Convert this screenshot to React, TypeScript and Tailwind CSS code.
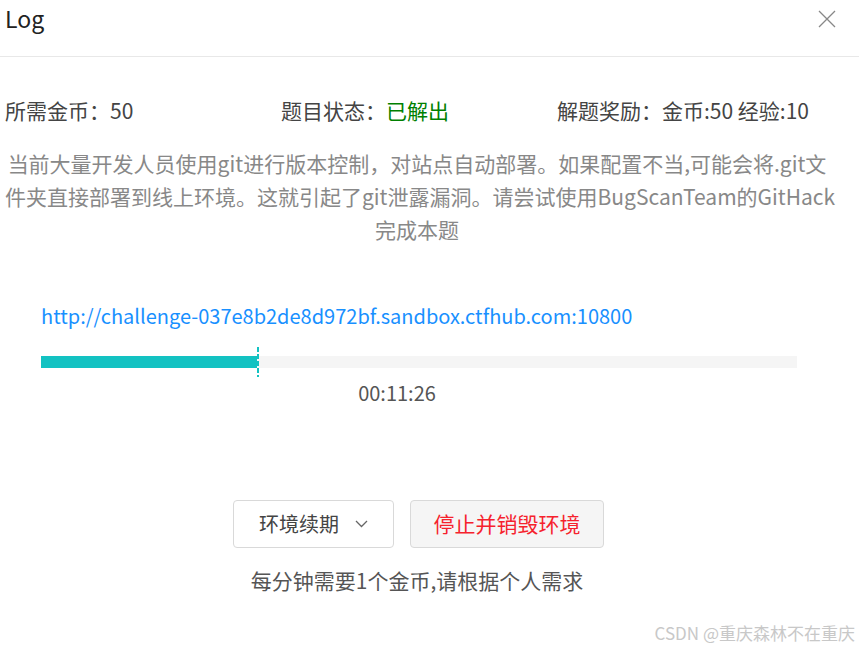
import React from 'react';

const font = { fontFamily: '"Noto Sans CJK SC", sans-serif' };

const App = () => {
  const percent = 28.6;

  return (
    <div className="relative w-[859px] h-[646px] bg-white text-[#333]" style={font}>
      <div className="flex h-[57px] items-start justify-between border-b border-[#e8e8e8] pl-[5px] pr-[23px] pt-[3px]">
        <span className="text-[23px] leading-[30px] text-[#222]">Log</span>
        <svg className="mt-[7px]" width="18" height="18" viewBox="0 0 18 18" fill="none" stroke="#888" strokeWidth="1.3">
          <path d="M1 1L17 17M17 1L1 17" />
        </svg>
      </div>

      <div className="w-[829px] pl-[5px]">
        <div className="mt-[40px] grid grid-cols-[276px_276px_276px] text-[21px] leading-[26px] text-[#444]">
          <div>所需金币：50</div>
          <div>
            题目状态：<span className="text-[#008000]">已解出</span>
          </div>
          <div>解题奖励：金币:50 经验:10</div>
        </div>

        <p className="mt-[24px] whitespace-nowrap text-center text-[21px] leading-[33px] text-[#888]">
          当前大量开发人员使用git进行版本控制，对站点自动部署。如果配置不当,可能会将.git文
          <br />
          件夹直接部署到线上环境。这就引起了git泄露漏洞。请尝试使用BugScanTeam的GitHack
          <br />
          完成本题
        </p>

        <div className="mt-[57px] px-[36px]">
          <div className="text-[20px] leading-[26px] text-[#1890ff]">
            http://challenge-037e8b2de8d972bf.sandbox.ctfhub.com:10800
          </div>

          <div className="relative mt-[27px] h-[12px] w-[756px] bg-[#f5f5f5]">
            <div className="h-full bg-[#13c2c2]" style={{ width: `${percent}%` }} />
            <div
              className="absolute top-[-9px] h-[30px] w-[2px] bg-[repeating-linear-gradient(#13c2c2_0_5px,transparent_5px_7px)]"
              style={{ left: `${percent}%` }}
            />
          </div>

          <div className="mt-[12px] w-[756px] pr-[44px] text-center text-[20px] leading-[26px] text-[#555]">00:11:26</div>
        </div>

        <div className="mt-[94px] flex justify-center gap-[16px] pl-[3px]">
          <button className="flex h-[48px] w-[161px] items-center justify-center gap-[16px] rounded-[4px] border border-[#d9d9d9] bg-white text-[20px] text-[#444]">
            环境续期
            <svg width="13" height="8" viewBox="0 0 13 8" fill="none" stroke="#666" strokeWidth="1.3">
              <path d="M1 1L6.5 6.5L12 1" />
            </svg>
          </button>
          <button className="h-[48px] w-[194px] rounded-[4px] border border-[#d9d9d9] bg-[#f5f5f5] text-[21px] text-[#f5222d]">
            停止并销毁环境
          </button>
        </div>

        <div className="mt-[19px] text-center text-[21px] leading-[26px] text-[#555]">每分钟需要1个金币,请根据个人需求</div>
      </div>

      <div className="absolute bottom-[3px] right-[4px] text-[17px] leading-[20px] text-[#c8c8c8]">CSDN @重庆森林不在重庆</div>
    </div>
  );
};

export default App;
